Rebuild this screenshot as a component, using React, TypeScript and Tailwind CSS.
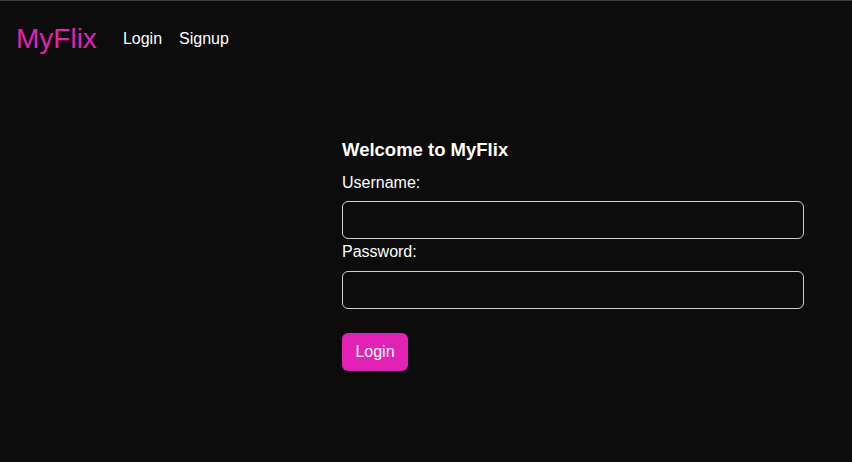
import React from "react";

export default function App() {
  return (
    <div
      className="min-h-[462px] w-full bg-[#0c0c0c] border-t border-[#3a3a3a] text-white"
      style={{ fontFamily: '"Liberation Sans", Arial, sans-serif' }}
    >
      <nav className="flex items-center h-[75px] px-4">
        <span className="text-[28px] leading-none text-[#e221b5] mr-[26px]">MyFlix</span>
        <div className="flex gap-[17px] text-[16px]">
          <span>Login</span>
          <span>Signup</span>
        </div>
      </nav>
      <div className="flex justify-end pr-[48px] pt-[62px]">
        <form className="w-[462px] flex flex-col">
          <h4 className="text-[18.5px] font-bold leading-[24px] mb-[9px]">Welcome to MyFlix</h4>
          <label className="text-[16px] leading-[24px] mb-[6px]">Username:</label>
          <input
            type="text"
            className="h-[38px] rounded-[6px] border border-[#cfcfcf] bg-[#0c0c0c] px-3 outline-none"
          />
          <label className="text-[16px] leading-[24px] mt-[1px] mb-[7px]">Password:</label>
          <input
            type="password"
            className="h-[38px] rounded-[6px] border border-[#cfcfcf] bg-[#0c0c0c] px-3 outline-none"
          />
          <div className="mt-[24px]">
            <button
              type="button"
              className="h-[38px] w-[66px] rounded-[6px] bg-[#e221b5] text-white text-[16px]"
            >
              Login
            </button>
          </div>
        </form>
      </div>
    </div>
  );
}
